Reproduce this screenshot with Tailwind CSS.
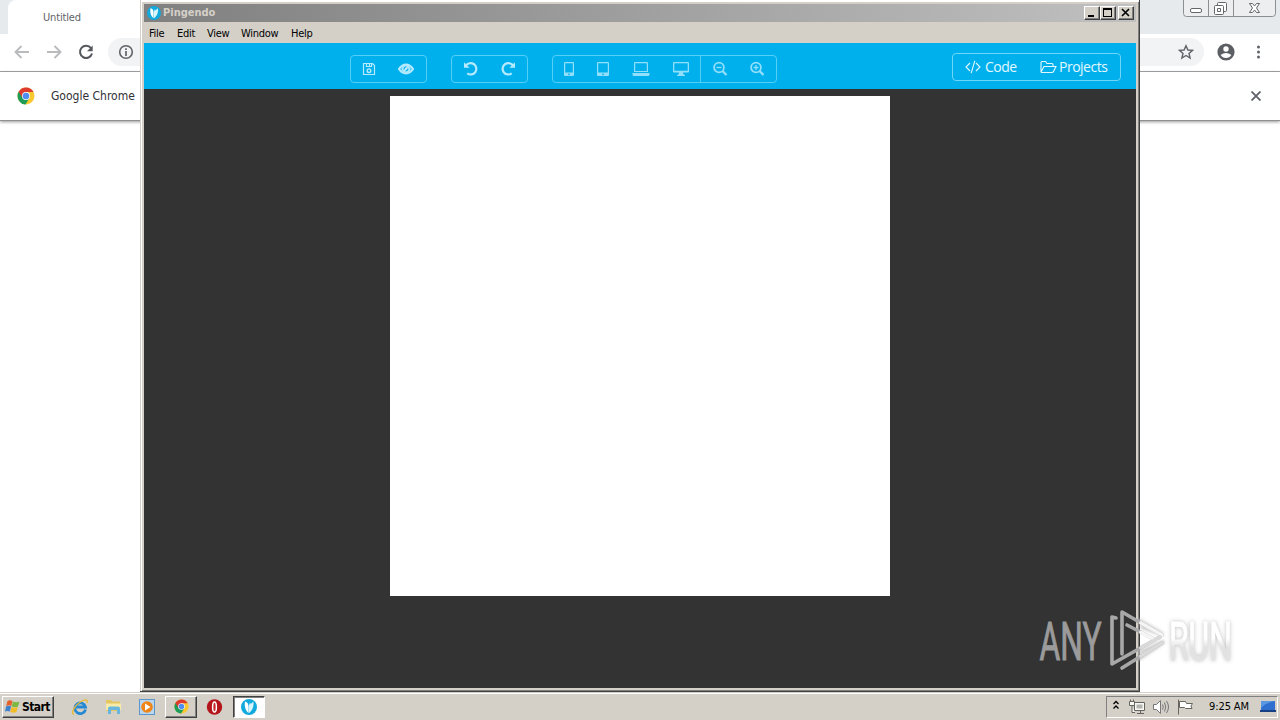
<!DOCTYPE html>
<html lang="en">
<head>
    <meta charset="UTF-8">
    <meta name="viewport" content="width=device-width, initial-scale=1.0">
    <title>Pingendo</title>
    <script src="https://cdn.jsdelivr.net/npm/@tailwindcss/browser@4"></script>
</head>
<body class="relative w-[1280px] h-[720px] overflow-hidden bg-white font-['DejaVu_Sans_Condensed','DejaVu_Sans',sans-serif] text-[11px] text-black">

    <!-- Shared symbols -->
    <svg class="hidden">
        <symbol id="chrome" viewBox="0 0 18 18">
            <circle cx="9" cy="9" r="8.500" fill="#fbc92f"/>
            <path d="M9 9L1.600 4.800A8.500 8.500 0 0 0 8.500 17.500L12.400 11Z" fill="#1f9d57"/>
            <path d="M9 5H16.500A8.500 8.500 0 0 0 1.600 4.800L5.500 11Z" fill="#dc3b2e"/>
            <circle cx="9" cy="9" r="4" fill="#fff"/>
            <circle cx="9" cy="9" r="3.300" fill="#4f8df0"/>
        </symbol>
        <symbol id="pingendo" viewBox="0 0 16 16">
            <circle cx="8" cy="8" r="8" fill="#12a9dc"/>
            <path d="M4 2.500C6.500 3 7.600 5 7.600 8V14C5 12 3 8 4 2.500Z" fill="#fff"/>
            <path d="M8 14V6.500L9 3.500L9.800 5L12.300 2.500C13.300 7 11.500 11.500 8 14Z" fill="#d9f5fc"/>
        </symbol>
    </svg>

    <!-- Browser in the background -->
    <div class="flex flex-col h-[692px] bg-white">
        <div class="flex justify-between h-[34px] bg-[#e7eaed] pl-2">
            <div class="w-[240px] h-full bg-white rounded-t-lg pl-[35px] pt-[11px] text-[#5f6368] leading-[14px] tracking-[-0.15px]">Untitled</div>
            <svg width="97" height="18" viewBox="0 0 97 18" fill="none" stroke="#8b8f94">
                <path d="M.5 0V13.500Q.5 16.500 3.500 16.500H89.500Q92.500 16.500 92.500 13.500V0M25.500 0V16.500M50.500 0V16.500" fill="#eceef0"/>
                <g stroke="#63686d">
                    <rect x="7.500" y="8.500" width="11" height="4" rx="1.500" fill="#fff"/>
                    <path d="M34.500 5.500V3.500Q34.500 2.500 35.500 2.500H42.500Q43.500 2.500 43.500 3.500V10.500Q43.500 11.500 42.500 11.500H40.500M32.500 5.500H39.500Q40.500 5.500 40.500 6.500V13.500Q40.500 14.500 39.500 14.500H32.500Q31.500 14.500 31.500 13.500V6.500Q31.500 5.500 32.500 5.500ZM34.500 8.500H37.500V11.500H34.500Z" fill="#fff"/>
                    <path d="M66.500 3.500H69.500L71.500 6L73.500 3.500H76.500L73.500 8L76.500 12.500H73.500L71.500 10L69.500 12.500H66.500L69.500 8Z" fill="#fff"/>
                </g>
            </svg>
        </div>
        <div class="flex justify-between h-[38px] border-b border-[#a5a7a9]">
            <div class="flex items-center pl-[13px] pb-px">
                <svg width="82" height="18" viewBox="0 0 82 18" fill="none" stroke-width="1.900">
                    <path d="M16 9H2.500M8.500 3L2.500 9L8.500 15M34 9H47.500M41.500 3L47.500 9L41.500 15" stroke="#b9bbbd"/>
                    <path d="M78 5.200A6.100 6.100 0 1 0 79 10.500" stroke="#55595e" stroke-width="2"/>
                    <path d="M79.700 2.500V8.200H74Z" fill="#55595e"/>
                </svg>
                <div class="flex items-center w-[60px] h-7 ml-[13px] pl-[10px] rounded-l-full bg-[#f1f3f4]">
                    <svg width="16" height="16" viewBox="0 0 16 16" fill="none" stroke="#5f6368">
                        <circle cx="8" cy="8" r="6.300" stroke-width="1.600"/>
                        <path d="M8 7V12M8 4.200V5.900" stroke-width="1.700"/>
                    </svg>
                </div>
            </div>
            <div class="flex items-center pb-px">
                <div class="flex items-center justify-end w-[94px] h-7 pr-[10px] rounded-r-full bg-[#f1f3f4]">
                    <svg width="16" height="16" viewBox="0 0 16 16" fill="none" stroke="#5f6368" stroke-width="1.400">
                        <path d="M8 1.800L9.900 6L14.500 6.400L11 9.400L12.100 14L8 11.500L3.900 14L5 9.400L1.500 6.400L6.100 6Z"/>
                    </svg>
                </div>
                <svg class="ml-[13px]" width="18" height="18" viewBox="0 0 18 18">
                    <circle cx="9" cy="9" r="8.600" fill="#5b5f64"/>
                    <circle cx="9" cy="6" r="2.700" fill="#fff"/>
                    <path d="M3.600 12Q9 8 14.400 12Q12.500 15 9 15Q5.500 15 3.600 12Z" fill="#fff"/>
                </svg>
                <svg class="ml-[21px] mr-[19px]" width="5" height="16" viewBox="0 0 5 16" fill="#5f6368">
                    <circle cx="2.500" cy="3" r="1.500"/><circle cx="2.500" cy="8" r="1.500"/><circle cx="2.500" cy="13" r="1.500"/>
                </svg>
            </div>
        </div>
        <div class="flex items-center justify-between h-[49px] pl-[17px] pr-[19px] border-b border-[#909090] shadow-[0_1px_3px_rgba(0,0,0,0.4)]">
            <div class="flex items-center gap-4 text-[12px] text-[#303236]">
                <svg width="18" height="18"><use href="#chrome"/></svg>
                <span class="whitespace-nowrap">Google Chrome</span>
            </div>
            <svg width="10" height="10" viewBox="0 0 10 10" stroke="#5f6368" stroke-width="1.800"><path d="M.5 .5L9.500 9.500M9.500 .5L.5 9.500"/></svg>
        </div>
    </div>

    <!-- Taskbar -->
    <div class="flex items-center justify-between h-7 bg-[#d4d0c8] border-t border-[#d4d0c8] shadow-[inset_0_1px_0_#fff]">
        <div class="flex items-center pl-[2px]">
            <div class="flex items-center gap-[2px] w-[52px] h-[22px] pl-[2px] bg-[#d4d0c8] border border-t-white border-l-white border-r-[#404040] border-b-[#404040] shadow-[inset_-1px_-1px_0_#808080]">
                <svg class="shrink-0" width="15" height="15" viewBox="0 0 15 15">
                    <path d="M2.500 2Q5 .5 7.500 2L6.300 7Q4 5.500 1.200 7Z" fill="#e5602b"/>
                    <path d="M8 2.500Q11 4 14.500 2.500L13 7.500Q10 9 6.700 7.500Z" fill="#7cb842"/>
                    <path d="M1 7.500Q3.500 6 6.200 7.500L4.800 12.500Q2.500 11.500 0 12.500Z" fill="#3f82cd"/>
                    <path d="M6.600 8Q10 9.500 12.800 8L11.500 13Q9 14.500 5.300 13Z" fill="#f4bd28"/>
                </svg>
                <span class="font-bold text-[12px] tracking-[-0.55px]">Start</span>
            </div>
            <!-- Internet Explorer -->
            <svg class="ml-[17px]" width="18" height="18" viewBox="0 0 18 18" fill="none">
                <path d="M14.500 11.500A5.400 5.400 0 1 1 14.500 9H5.500" stroke="#2488d2" stroke-width="2.800"/>
                <path d="M3 16.500C-1 16 4 6 12 2.500Q17.500 .5 16 5" stroke="#e9b931" stroke-width="1.300"/>
            </svg>
            <!-- Explorer -->
            <svg class="ml-[16px]" width="17" height="17" viewBox="0 0 17 17">
                <path d="M1 2H6L7 3.500H15V13H1Z" fill="#e3c65f"/>
                <path d="M1 5.500H16V12H1Z" fill="#f8eba9"/>
                <path d="M3 16V10.500Q3 8.500 5 8.500H13Q15 8.500 15 10.500V16H12V12H6V16Z" fill="#69b7df"/>
            </svg>
            <!-- Media player -->
            <svg class="ml-[17px]" width="16" height="16" viewBox="0 0 16 16">
                <rect x=".5" y=".5" width="15" height="15" fill="#b9d6ee" stroke="#5c97cb"/>
                <circle cx="8" cy="8" r="5.800" fill="#ef8518"/>
                <path d="M6 4.500L11.500 8L6 11.500Z" fill="#fff"/>
            </svg>
            <div class="flex items-center justify-center w-8 h-[22px] ml-[10px] bg-[#d4d0c8] border border-t-white border-l-white border-r-[#404040] border-b-[#404040] shadow-[inset_-1px_-1px_0_#808080]">
                <svg width="15" height="15"><use href="#chrome"/></svg>
            </div>
            <!-- Opera -->
            <svg class="ml-[9px]" width="17" height="16" viewBox="0 0 17 16">
                <circle cx="8.500" cy="8" r="7.700" fill="#b3151b"/>
                <ellipse cx="8.500" cy="8" rx="1.900" ry="5" fill="#c8282c" stroke="#fff" stroke-width="1.500"/>
            </svg>
            <div class="flex items-center justify-center w-8 h-[22px] ml-[10px] bg-white border border-t-[#404040] border-l-[#404040] border-r-white border-b-white shadow-[inset_1px_1px_0_#808080]">
                <svg width="16" height="16"><use href="#pingendo"/></svg>
            </div>
        </div>
        <div class="flex items-center w-[172px] h-[22px] mr-[2px] pl-[6px] border border-t-[#808080] border-l-[#808080] border-r-white border-b-white">
            <svg class="-mt-[3px]" width="6" height="10" viewBox="0 0 6 10" fill="none" stroke="#000" stroke-width="1.300"><path d="M.5 4L3 1.500L5.500 4M.5 8.500L3 6L5.500 8.500"/></svg>
            <svg class="ml-[10px]" width="17" height="16" viewBox="0 0 17 16" fill="#f8f8f5" stroke="#65655f">
                <path d="M5.500 3.500H15.500V11.500H5.500ZM8 14.500H15M11.500 12V14M.5 2.500H5.500V6.500H.5ZM1.500 .5V2M4.500 .5V2M3 7V13.500H6"/>
                <path d="M7.500 5.500H13.500V9.500H7.500Z" fill="#b4b4ae" stroke="none"/>
            </svg>
            <svg class="ml-[7px]" width="17" height="16" viewBox="0 0 17 16" fill="none" stroke="#77777a">
                <path d="M.5 5.500H3.500L7.500 1.500V14.500L3.500 10.500H.5Z" fill="#fff"/>
                <path d="M9.500 5.500Q11 8 9.500 10.500M11.500 3.500Q14 8 11.500 12.500M13.500 2Q17.500 8 13.500 14"/>
            </svg>
            <svg class="ml-[7px]" width="17" height="16" viewBox="0 0 17 16" fill="#fff" stroke="#66665f">
                <path d="M1.500 .5V15.500M2.500 2.500H8.500L9.500 4.500H15.500L14 7L15 9.500H8.500L7.500 8.500H2.500Z"/>
            </svg>
            <span class="ml-[15px] pt-[2px] whitespace-nowrap tracking-[-0.1px]">9:25 AM</span>
            <svg class="ml-auto mr-[1px]" width="16" height="14" viewBox="0 0 16 14">
                <path d="M1 1H15V10H1Z" fill="#2f6fd0"/><path d="M1 1H15Q5 3 1 8Z" fill="#5b98e2"/><path d="M0 10H16V12H0Z" fill="#174082"/>
            </svg>
        </div>
    </div>

    <!-- Pingendo window -->
    <div class="absolute left-[140px] top-0 w-[1000px] h-[692px] flex flex-col px-1 pt-1 pb-[3px] bg-[#d4d0c8] border-b border-r border-[#404040] shadow-[inset_1px_0_0_#d4d0c8,inset_2px_2px_0_#fff,inset_-1px_-1px_0_#808080]">
        <div class="flex items-center justify-between shrink-0 h-[18px] w-[992px] pl-[3px] pr-[2px] bg-linear-to-r from-[#808080] to-[#c0c0c0]">
            <div class="flex items-center gap-[2px] text-[#d4d0c8] font-bold">
                <svg width="14" height="14"><use href="#pingendo"/></svg>
                <span>Pingendo</span>
            </div>
            <div class="flex">
                <div class="w-4 h-[14px] bg-[#d4d0c8] border border-t-white border-l-white border-r-[#404040] border-b-[#404040] shadow-[inset_-1px_-1px_0_#808080]">
                    <svg width="14" height="12" viewBox="0 0 14 12"><path d="M3 8H9V10H3Z"/></svg>
                </div>
                <div class="w-4 h-[14px] bg-[#d4d0c8] border border-t-white border-l-white border-r-[#404040] border-b-[#404040] shadow-[inset_-1px_-1px_0_#808080]">
                    <svg width="14" height="12" viewBox="0 0 14 12"><path d="M2 1H11V10H2ZM3 3V9H10V3Z" fill-rule="evenodd"/></svg>
                </div>
                <div class="w-4 h-[14px] ml-[2px] bg-[#d4d0c8] border border-t-white border-l-white border-r-[#404040] border-b-[#404040] shadow-[inset_-1px_-1px_0_#808080]">
                    <svg width="14" height="12" viewBox="0 0 14 12" stroke="#000" stroke-width="1.600"><path d="M3 2L10 9M10 2L3 9"/></svg>
                </div>
            </div>
        </div>
        <div class="flex items-center shrink-0 h-[21px] pl-[5px] pt-[3px] tracking-[-0.3px]">
            <span class="w-[28px]">File</span>
            <span class="w-[30px]">Edit</span>
            <span class="w-[34px]">View</span>
            <span class="w-[50px]">Window</span>
            <span>Help</span>
        </div>
        <div class="flex items-start shrink-0 h-[46px] w-[992px] pl-[206px] pt-3 bg-[#00b0ed] text-[#b5eaff]">
            <div class="flex items-center w-[77px] h-7 pl-[11px] border border-[#55cff7] rounded-[4px]">
                <svg width="14" height="14" viewBox="0 0 14 14" fill="none" stroke="currentColor">
                    <path d="M1.500 1.500H10.500L12.500 3.500V12.500H1.500ZM4.500 1.500V4.500H9.500V1.500M7.500 2V4" stroke-width="1.200"/>
                    <circle cx="7" cy="8.700" r="1.800" stroke-width="1.400"/>
                </svg>
                <svg class="ml-[22px]" width="16" height="12" viewBox="0 0 16 12" fill="none" stroke="currentColor">
                    <path d="M.8 6Q4 1.500 8 1.500Q12 1.500 15.200 6Q12 10.500 8 10.500Q4 10.500 .8 6Z" stroke-width="1.900" fill="currentColor" fill-opacity=".5"/>
                    <circle cx="8" cy="6" r="3.600" fill="currentColor"/>
                    <path d="M6 6.500Q6 4 8.500 3.800M7.500 8Q9.800 8 10 5.500" stroke="#00b0ed" stroke-width="1.100"/>
                </svg>
            </div>
            <div class="flex items-center justify-around w-[77px] h-7 ml-6 border border-[#55cff7] rounded-[4px]">
                <svg width="16" height="16" viewBox="0 0 16 16" fill="none" stroke="currentColor" stroke-width="2.200">
                    <path d="M2.800 4.800A5.700 5.700 0 1 1 4.300 12.400"/><path d="M1 1.200V6.800H6.600Z" fill="currentColor" stroke="none"/>
                </svg>
                <svg width="16" height="16" viewBox="0 0 16 16" fill="none" stroke="currentColor" stroke-width="2.200">
                    <path d="M13.200 4.800A5.700 5.700 0 1 0 11.700 12.400"/><path d="M15 1.200V6.800H9.400Z" fill="currentColor" stroke="none"/>
                </svg>
            </div>
            <div class="flex items-center w-[225px] h-7 ml-6 border border-[#55cff7] rounded-[4px] text-[#92dffb]">
                <svg class="ml-[11px]" width="10" height="16" viewBox="0 0 10 16">
                    <path d="M1 1H9Q10 1 10 2V14Q10 15 9 15H1Q0 15 0 14V2Q0 1 1 1ZM1.200 2.200V11.500H8.800V2.200ZM5 12.400A.9 .9 0 1 0 5 14.200A.9 .9 0 1 0 5 12.400" fill="currentColor" fill-rule="evenodd"/>
                </svg>
                <svg class="ml-[23px]" width="12" height="16" viewBox="0 0 12 16">
                    <path d="M1 1H11Q12 1 12 2V14Q12 15 11 15H1Q0 15 0 14V2Q0 1 1 1ZM1.200 2.200V11.500H10.800V2.200ZM6 12.400A.9 .9 0 1 0 6 14.200A.9 .9 0 1 0 6 12.400" fill="currentColor" fill-rule="evenodd"/>
                </svg>
                <svg class="ml-[23px]" width="18" height="16" viewBox="0 0 18 16">
                    <path d="M2 2Q2 1 3 1H15Q16 1 16 2V11H2ZM3.200 2.200V10H14.800V2.200ZM.5 12H17.500V13.500Q17.500 15 16 15H2Q.5 15 .5 13.500Z" fill="currentColor" fill-rule="evenodd"/>
                </svg>
                <svg class="ml-[23px]" width="16" height="16" viewBox="0 0 16 16">
                    <path d="M1 1H15Q16 1 16 2V10.500Q16 11.500 15 11.500H10L10.500 13.500L12 14V15H4V14L5.500 13.500L6 11.500H1Q0 11.500 0 10.500V2Q0 1 1 1ZM1.300 2.300V9.700H14.700V2.300Z" fill="currentColor" fill-rule="evenodd"/>
                </svg>
                <div class="w-px h-full ml-[11px] bg-[#55cff7]"></div>
                <svg class="ml-[11px]" width="16" height="16" viewBox="0 0 16 16" fill="none" stroke="currentColor" stroke-width="1.800">
                    <circle cx="7" cy="6.500" r="4.900"/><path d="M10.500 10L14.500 14" stroke-width="2.300"/><path d="M4.500 6.500H9.500" stroke-width="1.300"/>
                </svg>
                <svg class="ml-[21px]" width="16" height="16" viewBox="0 0 16 16" fill="none" stroke="currentColor" stroke-width="1.800">
                    <circle cx="7" cy="6.500" r="4.900"/><path d="M10.500 10L14.500 14" stroke-width="2.300"/><path d="M4.500 6.500H9.500M7 4V9" stroke-width="1.300"/>
                </svg>
            </div>
            <div class="flex items-center w-[169px] h-7 ml-auto mr-[15px] -mt-[2px] pl-3 border border-[#70d6f9] rounded-[4px] font-['Open_Sans','Noto_Sans',sans-serif] text-[14px] text-[#e3f8ff]">
                <svg width="16" height="14" viewBox="0 0 16 14" fill="none" stroke="currentColor" stroke-width="1.100"><path d="M5 3L1 7L5 11M11 3L15 7L11 11M9.800 .8L6.200 13.200"/></svg>
                <span class="ml-1 w-[33px] pb-px whitespace-nowrap tracking-[-0.5px]">Code</span>
                <svg class="ml-[22px]" width="17" height="14" viewBox="0 0 17 14" fill="none" stroke="currentColor" stroke-width="1.100">
                    <path d="M1 12V2.500Q1 1.500 2 1.500H5.500L7 3.500H12Q13 3.500 13 4.500V6.500M1 12L4 6.500H16L13.500 11.500Q13 12.500 12 12.500H1.500Z"/>
                </svg>
                <span class="ml-[2px] pb-px whitespace-nowrap tracking-[-0.5px]">Projects</span>
            </div>
        </div>
        <div class="flex justify-center items-start flex-1 w-[992px] pt-[7px] bg-[#333]">
            <div class="w-[500px] h-[500px] bg-white"></div>
        </div>
    </div>

    <!-- Watermark -->
    <svg class="absolute left-[1020px] top-[600px]" width="250" height="90" viewBox="0 0 250 90">
        <defs>
            <filter id="soft" x="-20%" y="-20%" width="140%" height="140%"><feGaussianBlur stdDeviation="1.500"/></filter>
            <linearGradient id="fade" x1="0" y1="0" x2="0" y2="1">
                <stop offset=".45" stop-color="#fff"/><stop offset=".6" stop-color="#e2e2e2"/>
            </linearGradient>
        </defs>
        <g font-family="Roboto, sans-serif" font-size="53" stroke-width="1">
            <text x="19.500" y="59.500" textLength="62" lengthAdjust="spacingAndGlyphs" fill="#9b9b9b" stroke="#9b9b9b">ANY</text>
            <text x="149" y="59.500" textLength="63" lengthAdjust="spacingAndGlyphs" fill="url(#fade)" stroke="url(#fade)" class="drop-shadow-[0_0_2px_rgba(0,0,0,0.25)]">RUN</text>
        </g>
        <g fill="none" stroke-width="3.600" stroke-linejoin="round" stroke-linecap="round">
            <path d="M120 21L142 34L122 27M120 58L143 42L120 52" stroke="#d0d0d0" stroke-width="4" filter="url(#soft)"/>
            <path d="M96 18L92 17V64L140 37M102 54V12L142 35M107 25L136 40M102 68L142 43" stroke="#a8a8a8"/>
            <path d="M121 23L142 35M121 32.300L136 40" stroke="#f5f5f5"/>
            <path d="M121 47.700L140 37M121 56L142 43" stroke="#dadada"/>
        </g>
    </svg>
</body>
</html>
